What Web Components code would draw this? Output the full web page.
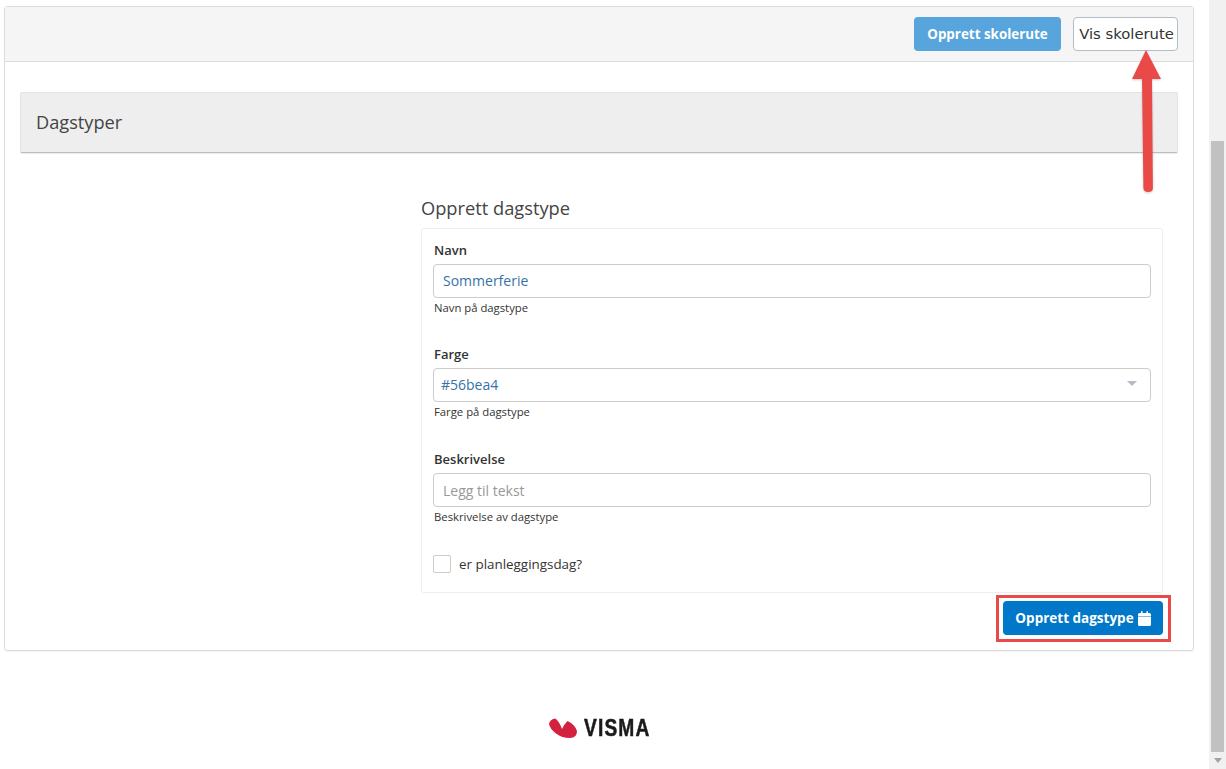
<!DOCTYPE html>
<html lang="no">
<head>
<meta charset="utf-8">
<title>Dagstyper</title>
<style>
  html, body { margin: 0; height: 100%; overflow: hidden; background: #fff; }
  body { font-family: "Open Sans", "Liberation Sans", sans-serif; color: #333; }
</style>
</head>
<body>
<app-page>
  <school-panel>
    <app-button slot="actions" variant="light">Opprett skolerute</app-button>
    <app-button slot="actions" variant="outline">Vis skolerute</app-button>
    <section-bar>Dagstyper</section-bar>
    <daytype-form></daytype-form>
  </school-panel>
  <visma-logo slot="footer"></visma-logo>
</app-page>

<script>
  class AppPage extends HTMLElement {
    constructor() {
      super();
      this.attachShadow({ mode: 'open' });
      this.shadowRoot.innerHTML = `
        <style>
          :host { display: flex; position: relative; width: 1226px; height: 769px; overflow: hidden; }
          main { flex: 1; min-width: 0; padding: 6px 15px 0 4px; }
          footer { display: flex; justify-content: center; padding: 66px 0 0 0; }
          .bar { width: 17px; flex: none; display: flex; flex-direction: column; background: #f1f1f1; }
          .track { height: 141px; }
          .thumb { flex: 1; margin: 0 2px; background: #c1c1c1; }
          .down { height: 17px; display: flex; align-items: center; justify-content: center; }
          .down i { width: 0; height: 0; border: 4px solid transparent; border-top: 5px solid #a3a3a3; border-bottom: 0; }
          .arrow { position: absolute; left: 1130px; top: 45px; filter: drop-shadow(0 1px 1px rgba(0,0,0,.2)); }
        </style>
        <main>
          <slot></slot>
          <footer><slot name="footer"></slot></footer>
        </main>
        <div class="bar"><div class="track"></div><div class="thumb"></div><div class="down"><i></i></div></div>
        <svg class="arrow" width="36" height="152" viewBox="0 0 36 152">
          <path d="M12 34 L13.400 143 Q13.500 147 18.200 147 Q23 147 22.900 143 L22 34 L31 34 L16 5 L2 34 Z" fill="#e94a47"/>
        </svg>`;
    }
  }

  class SchoolPanel extends HTMLElement {
    constructor() {
      super();
      this.attachShadow({ mode: 'open' });
      this.shadowRoot.innerHTML = `
        <style>
          :host { display: block; border: 1px solid #dcdcdc; border-radius: 3px; box-shadow: 0 1px 1px rgba(0,0,0,.05); }
          header { display: flex; justify-content: flex-end; gap: 12px; height: 55px; box-sizing: border-box; padding: 10px 15px 0 0; background: #f5f5f5; border-bottom: 1px solid #ddd; }
          .body { padding: 30px 15px 15px 15px; }
        </style>
        <header><slot name="actions"></slot></header>
        <div class="body"><slot></slot></div>`;
    }
  }

  class AppButton extends HTMLElement {
    constructor() {
      super();
      this.attachShadow({ mode: 'open' });
      this.shadowRoot.innerHTML = `
        <style>
          :host { display: inline-flex; align-items: center; justify-content: center; gap: 4px; height: 34px; box-sizing: border-box; border-radius: 4px; font-size: 13.4px; font-weight: 700; color: #fff; white-space: nowrap; }
          :host([variant="light"]) { width: 147px; background: #57a5dc; }
          :host([variant="primary"]) { width: 160px; background: #0077c8; font-size: 13.5px; }
          :host([variant="outline"]) { width: 105px; padding: 0 0 2px 2px; background: #fff; border: 1px solid #b4bcc4; color: #333; font: 400 14.8px "DejaVu Sans", sans-serif; }
        </style>
        <slot></slot>`;
    }
  }

  class SectionBar extends HTMLElement {
    constructor() {
      super();
      this.attachShadow({ mode: 'open' });
      this.shadowRoot.innerHTML = `
        <style>
          :host { display: flex; align-items: center; height: 61px; box-sizing: border-box; padding: 0 15px 2px; background: #eee; border: 1px solid #e3e3e3; border-bottom: 1px solid #bdbdbd; border-radius: 2px; box-shadow: 0 1px 1px rgba(0,0,0,.08); font-size: 18.2px; color: #444; }
        </style>
        <slot></slot>`;
    }
  }

  class FormField extends HTMLElement {
    constructor() {
      super();
      this.attachShadow({ mode: 'open' });
      const isPlaceholder = this.hasAttribute('placeholder');
      const isSelect = this.hasAttribute('select');
      this.shadowRoot.innerHTML = `
        <style>
          :host { display: block; }
          label { display: block; height: 24px; padding: 1px 0 0 1px; box-sizing: border-box; font-size: 13px; font-weight: 600; line-height: 18px; color: #333; }
          .box { display: flex; align-items: center; justify-content: space-between; height: 34px; box-sizing: border-box; padding: ${isSelect ? '0 13px 2px 7px' : isPlaceholder ? '0 9px' : '0 9px 2px'}; border: 1px solid #ccc; border-radius: 4px; font-size: 14px; color: ${isPlaceholder ? '#999' : '#3572a8'}; }
          .caret { width: 0; height: 0; border: 5px solid transparent; border-top: 5px solid #b4bcc6; border-bottom: 0; margin-top: -2px; }
          small { display: block; margin-top: 2px; padding-left: 1px; font-size: 11.3px; line-height: 15px; color: #333; }
        </style>
        <label>${this.getAttribute('label')}</label>
        <div class="box"><span><slot></slot></span>${isSelect ? '<i class="caret"></i>' : ''}</div>
        <small>${this.getAttribute('help')}</small>`;
    }
  }

  class CheckField extends HTMLElement {
    constructor() {
      super();
      this.attachShadow({ mode: 'open' });
      this.shadowRoot.innerHTML = `
        <style>
          :host { display: flex; align-items: center; gap: 8px; font-size: 13.4px; color: #333; }
          i { width: 18px; height: 18px; box-sizing: border-box; border: 1px solid #ccc; border-radius: 2px; }
        </style>
        <i></i><span><slot></slot></span>`;
    }
  }

  class DaytypeForm extends HTMLElement {
    constructor() {
      super();
      this.attachShadow({ mode: 'open' });
      this.shadowRoot.innerHTML = `
        <style>
          :host { display: block; margin: 0 15px 0 401px; padding-top: 42px; }
          h2 { margin: 0; height: 33px; font-size: 18.25px; font-weight: 400; line-height: 26px; color: #444; }
          .card { height: 365px; box-sizing: border-box; padding: 11px 11px 0 11px; border: 1px solid #eee; border-radius: 3px; display: flex; flex-direction: column; }
          form-field:nth-child(2) { margin-top: 29px; }
          form-field:nth-child(3) { margin-top: 30px; }
          check-field { margin-top: 31px; }
          .actions { display: flex; justify-content: flex-end; padding-top: 8px; }
          .mark { display: flex; position: relative; }
          .mark::after { content: ''; position: absolute; inset: -6px -8px -7px -7px; border: 3px solid #e94a47; box-sizing: border-box; }
          svg { display: block; }
        </style>
        <h2>Opprett dagstype</h2>
        <div class="card">
          <form-field label="Navn" help="Navn på dagstype">Sommerferie</form-field>
          <form-field label="Farge" help="Farge på dagstype" select>#56bea4</form-field>
          <form-field label="Beskrivelse" help="Beskrivelse av dagstype" placeholder>Legg til tekst</form-field>
          <check-field>er planleggingsdag?</check-field>
        </div>
        <div class="actions">
          <div class="mark">
            <app-button variant="primary">Opprett dagstype
              <svg width="13" height="15" viewBox="0 0 13 15"><path fill="#fff" d="M0 5.600h13v7.900a1.500 1.500 0 0 1-1.500 1.500h-10A1.500 1.500 0 0 1 0 13.500zM1.500 2H3V.8a.8.8 0 0 1 1.600 0V2h3.800V.8a.8.8 0 0 1 1.600 0V2h1.500A1.500 1.500 0 0 1 13 3.500V5H0V3.500A1.500 1.500 0 0 1 1.500 2z"/></svg>
            </app-button>
          </div>
        </div>`;
    }
  }

  class VismaLogo extends HTMLElement {
    constructor() {
      super();
      this.attachShadow({ mode: 'open' });
      this.shadowRoot.innerHTML = `
        <style>
          :host { display: flex; align-items: center; gap: 7px; height: 22px; }
          span { font: 700 24px/22px "Liberation Sans", sans-serif; letter-spacing: 1.400px; color: #1a1a1a; -webkit-text-stroke: .5px #1a1a1a; display: inline-block; transform: scaleX(.8); transform-origin: left center; width: 65px; white-space: nowrap; }
        </style>
        <svg width="28" height="20" viewBox="0 0 28 20">
          <path d="M0 6 Q1 1 6.500 .5 Q10.500 4 13 11 Q15 6.500 18.500 3 Q25.500 6 28 13 Q28 20 21 20 Q13 20 7 15.500 Q1 11 0 6Z" fill="#d3213f"/>
        </svg>
        <span>VISMA</span>`;
    }
  }

  customElements.define('app-page', AppPage);
  customElements.define('school-panel', SchoolPanel);
  customElements.define('app-button', AppButton);
  customElements.define('section-bar', SectionBar);
  customElements.define('form-field', FormField);
  customElements.define('check-field', CheckField);
  customElements.define('daytype-form', DaytypeForm);
  customElements.define('visma-logo', VismaLogo);
</script>
</body>
</html>
